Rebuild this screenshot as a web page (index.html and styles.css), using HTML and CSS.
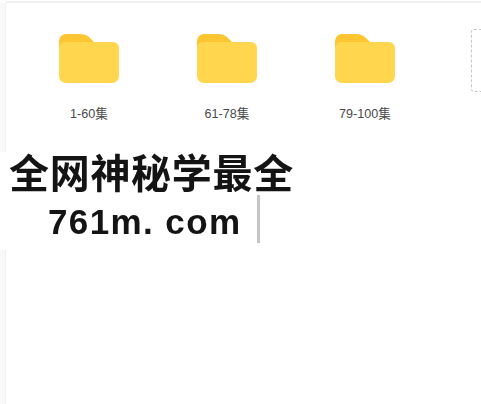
FILE: index.html
```html
<!DOCTYPE html>
<html lang="zh">
<head>
<meta charset="utf-8">
<title>文件夹</title>
<link rel="stylesheet" href="styles.css">
</head>
<body>
<div class="app">
  <aside class="rail"></aside>
  <main class="main">
    <div class="files">
      <div class="item">
        <div class="thumb">
          <svg class="folder" viewBox="0 0 60 49"><path class="tab" d="M0 20V7a7 7 0 0 1 7-7h14q6 0 10 4l5 5v11z"/><path class="body" d="M0 14a6 6 0 0 1 6-6h48a6 6 0 0 1 6 6v28a7 7 0 0 1-7 7H7a7 7 0 0 1-7-7z"/></svg>
        </div>
        <div class="label">1-60集</div>
      </div>
      <div class="item">
        <div class="thumb">
          <svg class="folder" viewBox="0 0 60 49"><path class="tab" d="M0 20V7a7 7 0 0 1 7-7h14q6 0 10 4l5 5v11z"/><path class="body" d="M0 14a6 6 0 0 1 6-6h48a6 6 0 0 1 6 6v28a7 7 0 0 1-7 7H7a7 7 0 0 1-7-7z"/></svg>
        </div>
        <div class="label">61-78集</div>
      </div>
      <div class="item">
        <div class="thumb">
          <svg class="folder" viewBox="0 0 60 49"><path class="tab" d="M0 20V7a7 7 0 0 1 7-7h14q6 0 10 4l5 5v11z"/><path class="body" d="M0 14a6 6 0 0 1 6-6h48a6 6 0 0 1 6 6v28a7 7 0 0 1-7 7H7a7 7 0 0 1-7-7z"/></svg>
        </div>
        <div class="label">79-100集</div>
      </div>
      <div class="item">
        <div class="thumb"><div class="doc"></div></div>
        <div class="label">1.txt</div>
      </div>
    </div>
    <div class="stamp">
      <div class="stamp-title">全网神秘学最全</div>
      <div class="stamp-url"><span class="stamp-link">761m. com</span><span class="caret"></span></div>
    </div>
  </main>
</div>
</body>
</html>
```

FILE: styles.css
```css
html, body {
  margin: 0;
  height: 100%;
  background: #fff;
  overflow: hidden;
}
.app {
  display: flex;
  height: 404px;
  width: 481px;
  overflow: hidden;
  font-family: "Liberation Sans", "Noto Sans CJK SC", sans-serif;
}
.rail {
  flex: 0 0 5px;
  margin-top: 3px;
  background: #f8f9fb;
  border-right: 1px solid #f0f1f4;
}
.main {
  flex: 1;
  min-width: 0;
  border-top: 2px solid #f0f1f3;
  margin-top: 1px;
  overflow: visible;
}
.files {
  display: flex;
  padding: 26px 0 0 14px;
  height: 120px;
  box-sizing: border-box;
  overflow: hidden;
}
.item {
  flex: 0 0 138px;
  display: flex;
  flex-direction: column;
  align-items: center;
}
.thumb {
  height: 64px;
  display: flex;
  align-items: flex-start;
  justify-content: center;
}
.folder {
  width: 60px;
  height: 49px;
  display: block;
  margin-top: 5px;
}
.tab { fill: #fdc532; }
.body { fill: #ffd64d; }
.doc {
  width: 64px;
  height: 63px;
  box-sizing: border-box;
  border: 1px dashed #c4c6ca;
  border-radius: 3px;
}
.label {
  margin-top: 13px;
  font-size: 12.6px;
  line-height: 17px;
  color: #4a4a4a;
  white-space: nowrap;
}
.stamp {
  position: relative;
  width: 298px;
  height: 98px;
  margin: 29px 0 0 -6px;
  background: #fff;
  color: #141414;
  font-weight: bold;
  filter: blur(0.35px);
}
.stamp-title {
  font-size: 40px;
  line-height: 42px;
  letter-spacing: 0.7px;
  padding-top: 1px;
  padding-left: 9px;
  white-space: nowrap;
}
.stamp-url {
  display: flex;
  align-items: flex-start;
  padding-left: 48px;
}
.stamp-link {
  font-size: 35px;
  line-height: 44px;
  letter-spacing: 1.4px;
  margin-top: 5px;
  white-space: nowrap;
  width: 209px;
}
.caret {
  width: 3px;
  height: 48px;
  background: #c5c5c5;
}
```
